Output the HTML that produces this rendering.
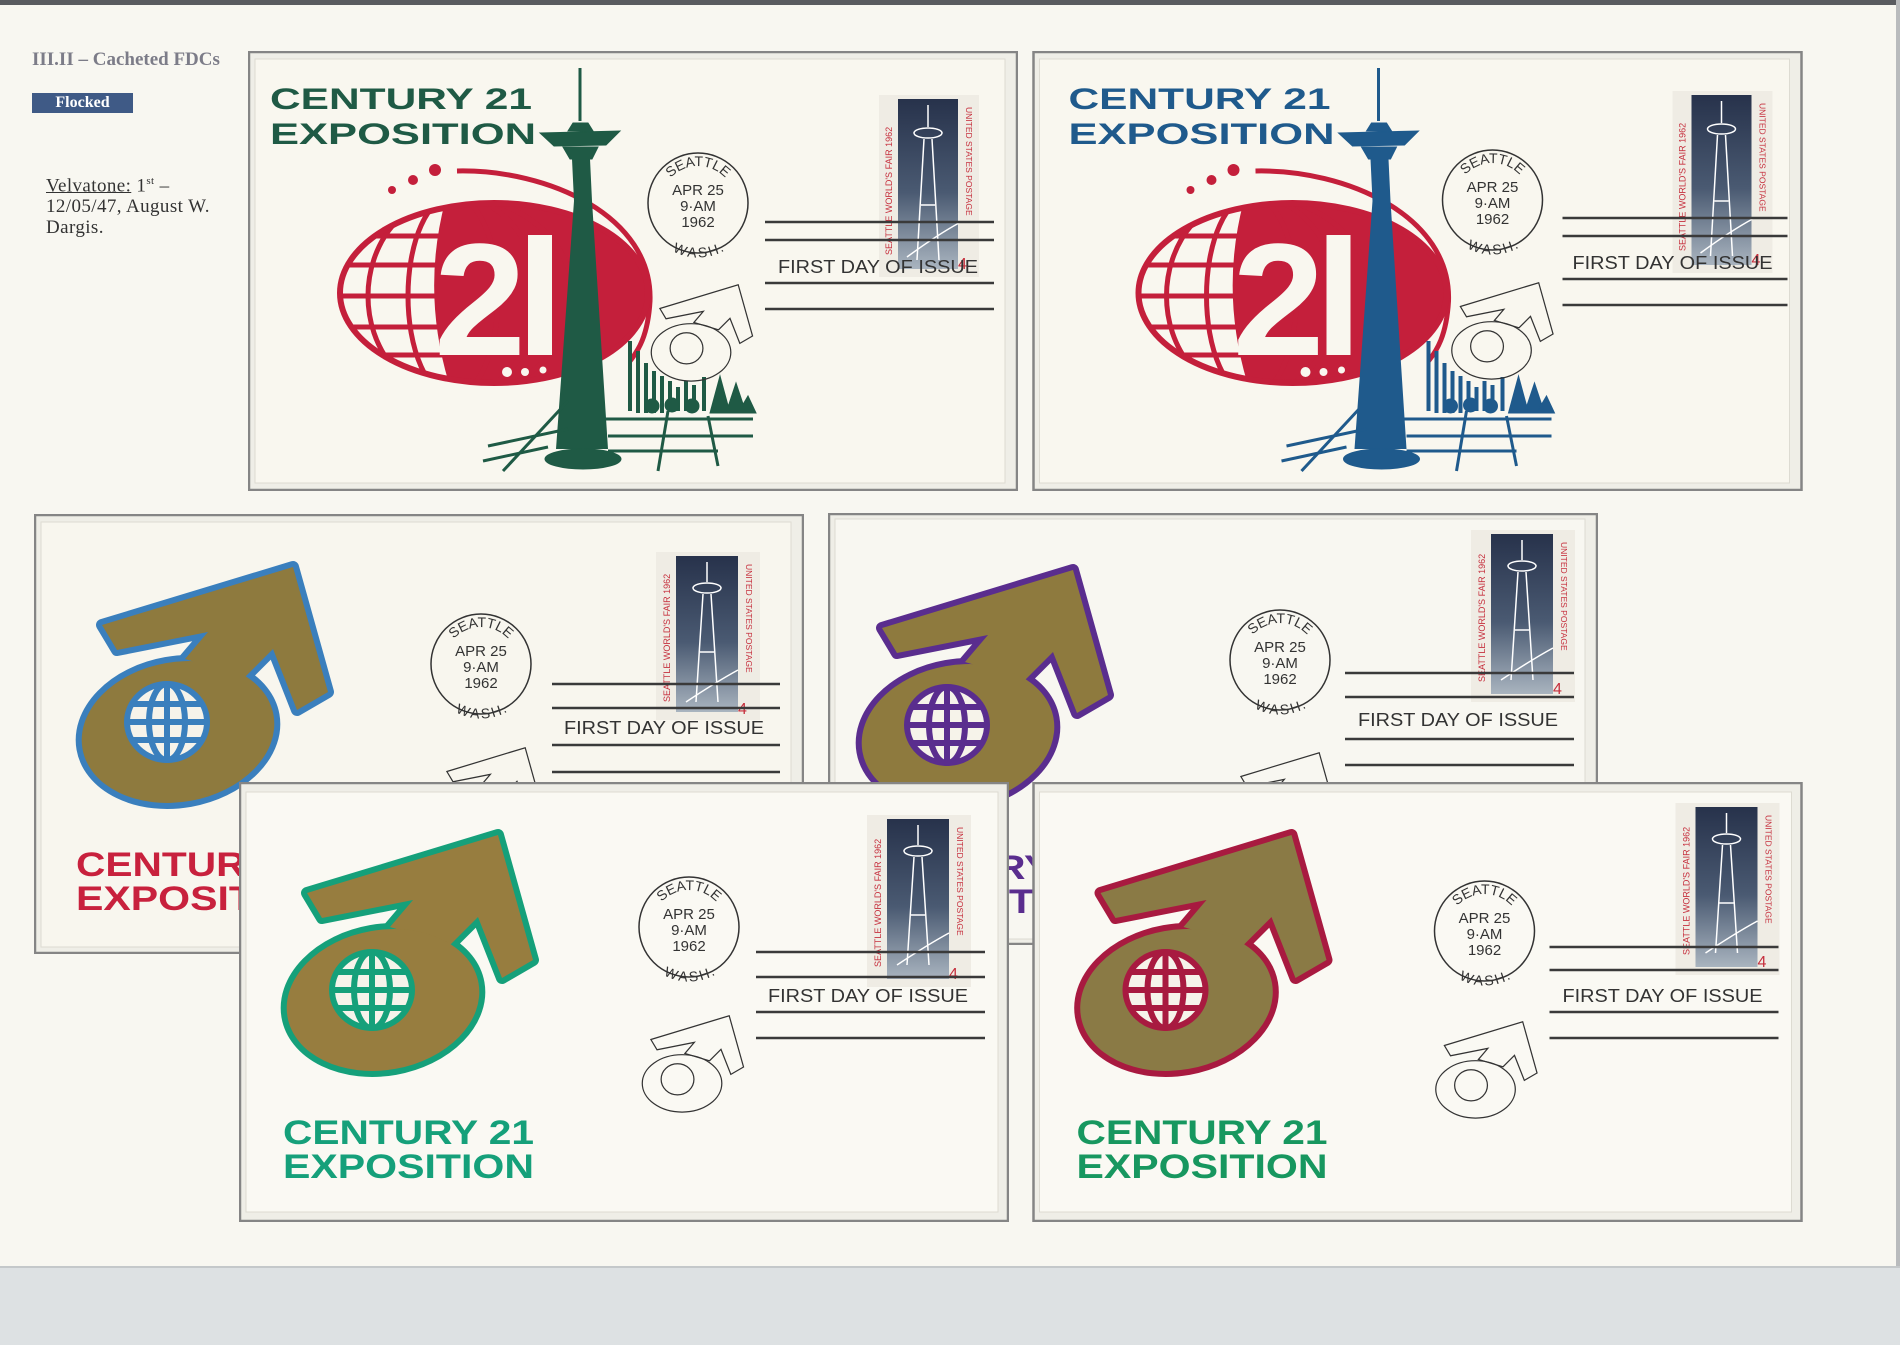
<!DOCTYPE html>
<html><head><meta charset="utf-8"><style>
html,body{margin:0;padding:0;}
body{width:1900px;height:1343px;position:relative;overflow:hidden;background:#f8f7f1;font-family:"Liberation Sans",sans-serif;}
.top{position:absolute;left:0;top:0;width:1900px;height:5px;background:#5a5c60;}
.rb{position:absolute;left:1896px;top:0;width:4px;height:1267px;background:#b9bbbd;}
.bot{position:absolute;left:0;top:1266px;width:1900px;height:77px;background:#dde1e3;border-top:2px solid #c4c8ca;}
.hd{position:absolute;left:32px;top:49px;font-family:"Liberation Serif",serif;font-weight:bold;font-size:19px;color:#7c7c88;white-space:nowrap;}
.fl{position:absolute;left:32px;top:93px;width:101px;height:20px;background:#3f5a86;color:#fff;font-family:"Liberation Serif",serif;font-weight:bold;font-size:16px;line-height:20px;text-align:center;}
.vt{position:absolute;left:46px;top:171px;font-family:"Liberation Serif",serif;font-size:19px;line-height:21px;color:#333;letter-spacing:0.4px;white-space:nowrap;}
.vt sup{font-size:11px;}
svg.c{position:absolute;}
</style></head><body>
<div class="top"></div><div class="rb"></div><div class="bot"></div>
<div class="hd">III.II – Cacheted FDCs</div>
<div class="fl">Flocked</div>
<div class="vt"><u>Velvatone:</u> 1<sup>st</sup> –<br>12/05/47, August W.<br>Dargis.</div>

<svg width="0" height="0" style="position:absolute">
<defs>
<linearGradient id="sg" x1="0" y1="0" x2="0" y2="1"><stop offset="0" stop-color="#27324b"/><stop offset="0.55" stop-color="#4a5a72"/><stop offset="1" stop-color="#a9b4bf"/></linearGradient>
<path id="at" d="M -37,0 A 37,37 0 0 1 37,0"/>
<path id="ab" d="M -44,0 A 44,44 0 0 0 44,0"/>
<clipPath id="ov"><ellipse cx="246" cy="242" rx="156" ry="92"/></clipPath>
</defs></svg>

<!-- COVER 3 (back) -->
<svg class="c" style="left:34px;top:514px" width="770" height="440" viewBox="0 0 770 440">
<rect x="1" y="1" width="768" height="438" fill="#efeee7" stroke="#858585" stroke-width="2.5"/>
<rect x="7" y="8" width="750" height="425" fill="#f8f6ee" stroke="#dddbd2"/>
<g stroke="#3a7fbd" stroke-width="12" stroke-linejoin="round"><polygon points="68,111 259,53 294,178 263,196 239,135 211,163 151,145 174,118 83,136"/><ellipse cx="144" cy="218" rx="97" ry="70" transform="rotate(-10 144 218)"/></g>
<g fill="#8e7a3e"><polygon points="68,111 259,53 294,178 263,196 239,135 211,163 151,145 174,118 83,136"/><ellipse cx="144" cy="218" rx="97" ry="70" transform="rotate(-10 144 218)"/></g>
<g stroke="#3a7fbd" stroke-width="6" fill="none"><ellipse cx="133" cy="208" rx="40" ry="38" fill="#f6f3ea"/><ellipse cx="133" cy="208" rx="18" ry="38"/><line x1="133" y1="170" x2="133" y2="246"/><line x1="94" y1="208" x2="172" y2="208"/><line x1="99" y1="190" x2="167" y2="190"/><line x1="99" y1="226" x2="167" y2="226"/></g>
<text x="42" y="362" font-weight="bold" font-size="34" fill="#c8213d" textLength="251" lengthAdjust="spacingAndGlyphs">CENTURY 21</text>
<text x="42" y="396" font-weight="bold" font-size="34" fill="#c8213d" textLength="251" lengthAdjust="spacingAndGlyphs">EXPOSITION</text>
<g transform="translate(622,38)"><rect width="104" height="168" fill="#efece4"/><rect x="20" y="4" width="62" height="156" fill="url(#sg)"/><g stroke="#fff" stroke-width="1.5" fill="none"><line x1="51" y1="10" x2="51" y2="30"/><ellipse cx="51" cy="36" rx="14" ry="5"/><path d="M47,42 L40,150 M55,42 L62,150 M44,100 L58,100"/><path d="M30,150 Q60,130 82,118"/></g><text transform="translate(14,150) rotate(-90)" font-size="9" fill="#c62f3d">SEATTLE WORLD'S FAIR 1962</text><text transform="translate(90,12) rotate(90)" font-size="8.5" fill="#c62f3d">UNITED STATES POSTAGE</text><text x="82" y="162" font-size="16" fill="#c62f3d">4</text></g>
<g transform="translate(447,150)" fill="#333" font-size="15" text-anchor="middle"><circle r="50" fill="none" stroke="#333" stroke-width="1.5"/><text font-size="14"><textPath href="#at" startOffset="50%">SEATTLE</textPath></text><text font-size="14"><textPath href="#ab" startOffset="50%" dominant-baseline="hanging">WASH.</textPath></text><text y="-8">APR 25</text><text y="8">9·AM</text><text y="24">1962</text></g>
<g stroke="#3a3a3a" stroke-width="2.5"><line x1="518" y1="170" x2="746" y2="170"/><line x1="518" y1="194" x2="746" y2="194"/><line x1="518" y1="231" x2="746" y2="231"/><line x1="518" y1="258" x2="746" y2="258"/></g>
<text x="530" y="220" font-size="18" fill="#333" textLength="200" lengthAdjust="spacingAndGlyphs">FIRST DAY OF ISSUE</text>
<g transform="translate(385,212) scale(0.41)" fill="none" stroke="#333" stroke-width="3"><polygon points="68,111 259,53 294,178 263,196 239,135 211,163 151,145 174,118 83,136"/><ellipse cx="144" cy="218" rx="97" ry="70"/><ellipse cx="133" cy="208" rx="40" ry="38"/></g>
</svg>

<!-- COVER 4 (back) -->
<svg class="c" style="left:828px;top:513px" width="770" height="432" viewBox="0 0 770 432">
<rect x="1" y="1" width="768" height="430" fill="#efeee7" stroke="#858585" stroke-width="2.5"/>
<rect x="7" y="6" width="750" height="420" fill="#f8f7f1" stroke="#dddbd2"/>
<g transform="translate(-14,4)">
<g stroke="#5a2d8e" stroke-width="12" stroke-linejoin="round"><polygon points="68,111 259,53 294,178 263,196 239,135 211,163 151,145 174,118 83,136"/><ellipse cx="144" cy="218" rx="97" ry="70" transform="rotate(-10 144 218)"/></g>
<g fill="#8e7a3e"><polygon points="68,111 259,53 294,178 263,196 239,135 211,163 151,145 174,118 83,136"/><ellipse cx="144" cy="218" rx="97" ry="70" transform="rotate(-10 144 218)"/></g>
<g stroke="#5a2d8e" stroke-width="6" fill="none"><ellipse cx="133" cy="208" rx="40" ry="38" fill="#f6f3ea"/><ellipse cx="133" cy="208" rx="18" ry="38"/><line x1="133" y1="170" x2="133" y2="246"/><line x1="94" y1="208" x2="172" y2="208"/><line x1="99" y1="190" x2="167" y2="190"/><line x1="99" y1="226" x2="167" y2="226"/></g>
<text x="42" y="362" font-weight="bold" font-size="34" fill="#5a2d8e" textLength="251" lengthAdjust="spacingAndGlyphs">CENTURY 21</text>
<text x="42" y="396" font-weight="bold" font-size="34" fill="#5a2d8e" textLength="251" lengthAdjust="spacingAndGlyphs">EXPOSITION</text>
</g>
<g transform="translate(643,17)"><rect width="104" height="172" fill="#efece4"/><rect x="20" y="4" width="62" height="160" fill="url(#sg)"/><g stroke="#fff" stroke-width="1.5" fill="none"><line x1="51" y1="10" x2="51" y2="30"/><ellipse cx="51" cy="36" rx="14" ry="5"/><path d="M47,42 L40,150 M55,42 L62,150 M44,100 L58,100"/><path d="M30,150 Q60,130 82,118"/></g><text transform="translate(14,152) rotate(-90)" font-size="9" fill="#c62f3d">SEATTLE WORLD'S FAIR 1962</text><text transform="translate(90,12) rotate(90)" font-size="8.5" fill="#c62f3d">UNITED STATES POSTAGE</text><text x="82" y="164" font-size="16" fill="#c62f3d">4</text></g>
<g transform="translate(452,147)" fill="#333" font-size="15" text-anchor="middle"><circle r="50" fill="none" stroke="#333" stroke-width="1.5"/><text font-size="14"><textPath href="#at" startOffset="50%">SEATTLE</textPath></text><text font-size="14"><textPath href="#ab" startOffset="50%" dominant-baseline="hanging">WASH.</textPath></text><text y="-8">APR 25</text><text y="8">9·AM</text><text y="24">1962</text></g>
<g stroke="#3a3a3a" stroke-width="2.5"><line x1="517" y1="160" x2="746" y2="160"/><line x1="517" y1="184" x2="746" y2="184"/><line x1="517" y1="226" x2="746" y2="226"/><line x1="517" y1="252" x2="746" y2="252"/></g>
<text x="530" y="213" font-size="18" fill="#333" textLength="200" lengthAdjust="spacingAndGlyphs">FIRST DAY OF ISSUE</text>
<g transform="translate(385,218) scale(0.41)" fill="none" stroke="#333" stroke-width="3"><polygon points="68,111 259,53 294,178 263,196 239,135 211,163 151,145 174,118 83,136"/><ellipse cx="144" cy="218" rx="97" ry="70"/></g>
</svg>

<!-- COVER 1 -->
<svg class="c" style="left:248px;top:51px" width="770" height="440" viewBox="0 0 770 440">
<rect x="1" y="1" width="768" height="438" fill="#efeee7" stroke="#858585" stroke-width="2.5"/>
<rect x="7" y="8" width="750" height="424" fill="#f9f7ef" stroke="#dddbd2"/>
<text x="22" y="58" font-weight="bold" font-size="30" fill="#1f5a45" textLength="262" lengthAdjust="spacingAndGlyphs">CENTURY 21</text>
<text x="22" y="93" font-weight="bold" font-size="30" fill="#1f5a45" textLength="266" lengthAdjust="spacingAndGlyphs">EXPOSITION</text>
<g fill="#c41f3b"><circle cx="144" cy="139" r="4"/><circle cx="165" cy="129" r="5"/><circle cx="187" cy="119" r="6"/></g>
<path d="M209,120 C300,118 405,165 402,250 C400,285 390,300 382,310" fill="none" stroke="#c41f3b" stroke-width="5"/>
<ellipse cx="246" cy="242" rx="156" ry="92" fill="#c41f3b"/>
<g clip-path="url(#ov)"><path d="M80,140 L200,140 Q170,242 205,345 L80,345 Z" fill="#f9f7ef"/>
<g stroke="#c41f3b" stroke-width="5" fill="none"><line x1="80" y1="185" x2="200" y2="185"/><line x1="80" y1="214" x2="200" y2="214"/><line x1="80" y1="245" x2="200" y2="245"/><line x1="80" y1="276" x2="200" y2="276"/><line x1="80" y1="304" x2="200" y2="304"/><ellipse cx="205" cy="245" rx="45" ry="100"/><ellipse cx="205" cy="245" rx="85" ry="100"/><ellipse cx="205" cy="245" rx="120" ry="100"/></g></g>
<ellipse cx="246" cy="242" rx="154" ry="90" fill="none" stroke="#c41f3b" stroke-width="6"/>
<text x="186" y="304" font-weight="bold" font-size="160" fill="#f9f7ef" textLength="92" lengthAdjust="spacingAndGlyphs">2</text>
<rect x="280" y="184" width="24" height="120" fill="#f9f7ef"/>
<g fill="#f9f7ef"><circle cx="259" cy="321" r="5"/><circle cx="277" cy="321" r="4"/><circle cx="295" cy="319" r="3.5"/></g>
<g fill="#1f5a45" stroke="#1f5a45">
<line x1="332" y1="17" x2="332" y2="70" stroke-width="3"/>
<path d="M325,72 L340,72 L345,80 L320,80 Z"/><path d="M292,82 L372,80 L358,94 L306,95 Z"/><path d="M315,96 L350,96 L344,108 L322,108 Z"/>
<path d="M324,108 L342,108 L344,150 L360,398 L308,398 L326,150 Z" stroke="none"/>
<ellipse cx="335" cy="408" rx="38" ry="10"/>
<g stroke-width="4"><line x1="382" y1="290" x2="382" y2="360"/><line x1="390" y1="300" x2="390" y2="362"/><line x1="398" y1="312" x2="398" y2="362"/><line x1="406" y1="320" x2="406" y2="362"/><line x1="414" y1="325" x2="414" y2="362"/><line x1="422" y1="330" x2="422" y2="360"/><line x1="430" y1="336" x2="430" y2="360"/><line x1="438" y1="330" x2="438" y2="360"/><line x1="446" y1="334" x2="446" y2="360"/><line x1="456" y1="326" x2="456" y2="360"/></g>
<path d="M462,362 L472,325 L482,362 Z M478,362 L488,332 L498,362 Z M490,362 L500,345 L508,362 Z"/>
<g stroke-width="3" fill="none"><line x1="240" y1="395" x2="320" y2="378"/><line x1="235" y1="410" x2="300" y2="396"/><line x1="255" y1="420" x2="320" y2="350"/><line x1="350" y1="368" x2="505" y2="368"/><line x1="360" y1="385" x2="505" y2="385"/><line x1="360" y1="400" x2="470" y2="400"/><line x1="420" y1="360" x2="410" y2="420"/><line x1="460" y1="365" x2="470" y2="415"/></g>
<circle cx="404" cy="355" r="7"/><circle cx="424" cy="354" r="7"/><circle cx="444" cy="355" r="7"/></g>
<g transform="translate(631,44)"><rect width="100" height="182" fill="#efece4"/><rect x="19" y="4" width="60" height="170" fill="url(#sg)"/><g stroke="#fff" stroke-width="1.5" fill="none"><line x1="49" y1="10" x2="49" y2="32"/><ellipse cx="49" cy="38" rx="14" ry="5"/><path d="M45,44 L38,165 M53,44 L60,165 M42,110 L56,110"/><path d="M28,162 Q58,140 80,128"/></g><text transform="translate(13,160) rotate(-90)" font-size="9" fill="#c62f3d">SEATTLE WORLD'S FAIR 1962</text><text transform="translate(87,12) rotate(90)" font-size="8.5" fill="#c62f3d">UNITED STATES POSTAGE</text><text x="79" y="174" font-size="16" fill="#c62f3d">4</text></g>
<g transform="translate(450,152)" fill="#333" font-size="15" text-anchor="middle"><circle r="50" fill="none" stroke="#333" stroke-width="1.5"/><text font-size="14"><textPath href="#at" startOffset="50%">SEATTLE</textPath></text><text font-size="14"><textPath href="#ab" startOffset="50%" dominant-baseline="hanging">WASH.</textPath></text><text y="-8">APR 25</text><text y="8">9·AM</text><text y="24">1962</text></g>
<g stroke="#3a3a3a" stroke-width="2.5"><line x1="517" y1="171" x2="746" y2="171"/><line x1="517" y1="189" x2="746" y2="189"/><line x1="517" y1="232" x2="746" y2="232"/><line x1="517" y1="258" x2="746" y2="258"/></g>
<text x="530" y="222" font-size="18" fill="#333" textLength="200" lengthAdjust="spacingAndGlyphs">FIRST DAY OF ISSUE</text>
<g transform="translate(384,212) scale(0.41)" fill="none" stroke="#333" stroke-width="3"><polygon points="68,111 259,53 294,178 263,196 239,135 211,163 151,145 174,118 83,136"/><ellipse cx="144" cy="218" rx="97" ry="70"/><ellipse cx="133" cy="208" rx="40" ry="38"/></g>
</svg>

<!-- COVER 2 -->
<svg class="c" style="left:1032px;top:51px" width="771" height="440" viewBox="0 0 770 440">
<rect x="1" y="1" width="768" height="438" fill="#efeee7" stroke="#858585" stroke-width="2.5"/>
<rect x="7" y="8" width="750" height="424" fill="#f9f7ef" stroke="#dddbd2"/>
<g transform="translate(14,0)">
<text x="22" y="58" font-weight="bold" font-size="30" fill="#1f5a8c" textLength="262" lengthAdjust="spacingAndGlyphs">CENTURY 21</text>
<text x="22" y="93" font-weight="bold" font-size="30" fill="#1f5a8c" textLength="266" lengthAdjust="spacingAndGlyphs">EXPOSITION</text>
<g fill="#c41f3b"><circle cx="144" cy="139" r="4"/><circle cx="165" cy="129" r="5"/><circle cx="187" cy="119" r="6"/></g>
<path d="M209,120 C300,118 405,165 402,250 C400,285 390,300 382,310" fill="none" stroke="#c41f3b" stroke-width="5"/>
<ellipse cx="246" cy="242" rx="156" ry="92" fill="#c41f3b"/>
<g clip-path="url(#ov)"><path d="M80,140 L200,140 Q170,242 205,345 L80,345 Z" fill="#f9f7ef"/>
<g stroke="#c41f3b" stroke-width="5" fill="none"><line x1="80" y1="185" x2="200" y2="185"/><line x1="80" y1="214" x2="200" y2="214"/><line x1="80" y1="245" x2="200" y2="245"/><line x1="80" y1="276" x2="200" y2="276"/><line x1="80" y1="304" x2="200" y2="304"/><ellipse cx="205" cy="245" rx="45" ry="100"/><ellipse cx="205" cy="245" rx="85" ry="100"/><ellipse cx="205" cy="245" rx="120" ry="100"/></g></g>
<ellipse cx="246" cy="242" rx="154" ry="90" fill="none" stroke="#c41f3b" stroke-width="6"/>
<text x="186" y="304" font-weight="bold" font-size="160" fill="#f9f7ef" textLength="92" lengthAdjust="spacingAndGlyphs">2</text>
<rect x="280" y="184" width="24" height="120" fill="#f9f7ef"/>
<g fill="#f9f7ef"><circle cx="259" cy="321" r="5"/><circle cx="277" cy="321" r="4"/><circle cx="295" cy="319" r="3.5"/></g>
<g fill="#1f5a8c" stroke="#1f5a8c">
<line x1="332" y1="17" x2="332" y2="70" stroke-width="3"/>
<path d="M325,72 L340,72 L345,80 L320,80 Z"/><path d="M292,82 L372,80 L358,94 L306,95 Z"/><path d="M315,96 L350,96 L344,108 L322,108 Z"/>
<path d="M324,108 L342,108 L344,150 L360,398 L308,398 L326,150 Z" stroke="none"/>
<ellipse cx="335" cy="408" rx="38" ry="10"/>
<g stroke-width="4"><line x1="382" y1="290" x2="382" y2="360"/><line x1="390" y1="300" x2="390" y2="362"/><line x1="398" y1="312" x2="398" y2="362"/><line x1="406" y1="320" x2="406" y2="362"/><line x1="414" y1="325" x2="414" y2="362"/><line x1="422" y1="330" x2="422" y2="360"/><line x1="430" y1="336" x2="430" y2="360"/><line x1="438" y1="330" x2="438" y2="360"/><line x1="446" y1="334" x2="446" y2="360"/><line x1="456" y1="326" x2="456" y2="360"/></g>
<path d="M462,362 L472,325 L482,362 Z M478,362 L488,332 L498,362 Z M490,362 L500,345 L508,362 Z"/>
<g stroke-width="3" fill="none"><line x1="240" y1="395" x2="320" y2="378"/><line x1="235" y1="410" x2="300" y2="396"/><line x1="255" y1="420" x2="320" y2="350"/><line x1="350" y1="368" x2="505" y2="368"/><line x1="360" y1="385" x2="505" y2="385"/><line x1="360" y1="400" x2="470" y2="400"/><line x1="420" y1="360" x2="410" y2="420"/><line x1="460" y1="365" x2="470" y2="415"/></g>
<circle cx="404" cy="355" r="7"/><circle cx="424" cy="354" r="7"/><circle cx="444" cy="355" r="7"/></g>
</g>
<g transform="translate(640,40)"><rect width="100" height="182" fill="#efece4"/><rect x="19" y="4" width="60" height="170" fill="url(#sg)"/><g stroke="#fff" stroke-width="1.5" fill="none"><line x1="49" y1="10" x2="49" y2="32"/><ellipse cx="49" cy="38" rx="14" ry="5"/><path d="M45,44 L38,165 M53,44 L60,165 M42,110 L56,110"/><path d="M28,162 Q58,140 80,128"/></g><text transform="translate(13,160) rotate(-90)" font-size="9" fill="#c62f3d">SEATTLE WORLD'S FAIR 1962</text><text transform="translate(87,12) rotate(90)" font-size="8.5" fill="#c62f3d">UNITED STATES POSTAGE</text><text x="79" y="174" font-size="16" fill="#c62f3d">4</text></g>
<g transform="translate(460,149)" fill="#333" font-size="15" text-anchor="middle"><circle r="50" fill="none" stroke="#333" stroke-width="1.5"/><text font-size="14"><textPath href="#at" startOffset="50%">SEATTLE</textPath></text><text font-size="14"><textPath href="#ab" startOffset="50%" dominant-baseline="hanging">WASH.</textPath></text><text y="-8">APR 25</text><text y="8">9·AM</text><text y="24">1962</text></g>
<g stroke="#3a3a3a" stroke-width="2.5"><line x1="530" y1="167" x2="755" y2="167"/><line x1="530" y1="185" x2="755" y2="185"/><line x1="530" y1="228" x2="755" y2="228"/><line x1="530" y1="254" x2="755" y2="254"/></g>
<text x="540" y="218" font-size="18" fill="#333" textLength="200" lengthAdjust="spacingAndGlyphs">FIRST DAY OF ISSUE</text>
<g transform="translate(400,210) scale(0.41)" fill="none" stroke="#333" stroke-width="3"><polygon points="68,111 259,53 294,178 263,196 239,135 211,163 151,145 174,118 83,136"/><ellipse cx="144" cy="218" rx="97" ry="70"/><ellipse cx="133" cy="208" rx="40" ry="38"/></g>
</svg>

<!-- COVER 5 -->
<svg class="c" style="left:239px;top:782px" width="770" height="440" viewBox="0 0 770 440">
<rect x="1" y="1" width="768" height="438" fill="#efeee7" stroke="#858585" stroke-width="2.5"/>
<rect x="7" y="10" width="752" height="420" fill="#faf9f3" stroke="#dddbd2"/>
<g stroke="#15a07a" stroke-width="12" stroke-linejoin="round"><polygon points="68,111 259,53 294,178 263,196 239,135 211,163 151,145 174,118 83,136"/><ellipse cx="144" cy="218" rx="97" ry="70" transform="rotate(-10 144 218)"/></g>
<g fill="#977d3f"><polygon points="68,111 259,53 294,178 263,196 239,135 211,163 151,145 174,118 83,136"/><ellipse cx="144" cy="218" rx="97" ry="70" transform="rotate(-10 144 218)"/></g>
<g stroke="#15a07a" stroke-width="6" fill="none"><ellipse cx="133" cy="208" rx="40" ry="38" fill="#f6f3ea"/><ellipse cx="133" cy="208" rx="18" ry="38"/><line x1="133" y1="170" x2="133" y2="246"/><line x1="94" y1="208" x2="172" y2="208"/><line x1="99" y1="190" x2="167" y2="190"/><line x1="99" y1="226" x2="167" y2="226"/></g>
<text x="44" y="362" font-weight="bold" font-size="34" fill="#15a07a" textLength="251" lengthAdjust="spacingAndGlyphs">CENTURY 21</text>
<text x="44" y="396" font-weight="bold" font-size="34" fill="#15a07a" textLength="251" lengthAdjust="spacingAndGlyphs">EXPOSITION</text>
<g transform="translate(628,33)"><rect width="104" height="172" fill="#efece4"/><rect x="20" y="4" width="62" height="160" fill="url(#sg)"/><g stroke="#fff" stroke-width="1.5" fill="none"><line x1="51" y1="10" x2="51" y2="30"/><ellipse cx="51" cy="36" rx="14" ry="5"/><path d="M47,42 L40,150 M55,42 L62,150 M44,100 L58,100"/><path d="M30,150 Q60,130 82,118"/></g><text transform="translate(14,152) rotate(-90)" font-size="9" fill="#c62f3d">SEATTLE WORLD'S FAIR 1962</text><text transform="translate(90,12) rotate(90)" font-size="8.5" fill="#c62f3d">UNITED STATES POSTAGE</text><text x="82" y="164" font-size="16" fill="#c62f3d">4</text></g>
<g transform="translate(450,145)" fill="#333" font-size="15" text-anchor="middle"><circle r="50" fill="none" stroke="#333" stroke-width="1.5"/><text font-size="14"><textPath href="#at" startOffset="50%">SEATTLE</textPath></text><text font-size="14"><textPath href="#ab" startOffset="50%" dominant-baseline="hanging">WASH.</textPath></text><text y="-8">APR 25</text><text y="8">9·AM</text><text y="24">1962</text></g>
<g stroke="#3a3a3a" stroke-width="2.5"><line x1="517" y1="170" x2="746" y2="170"/><line x1="517" y1="195" x2="746" y2="195"/><line x1="517" y1="230" x2="746" y2="230"/><line x1="517" y1="256" x2="746" y2="256"/></g>
<text x="529" y="220" font-size="18" fill="#333" textLength="200" lengthAdjust="spacingAndGlyphs">FIRST DAY OF ISSUE</text>
<g transform="translate(384,212) scale(0.41)" fill="none" stroke="#333" stroke-width="3"><polygon points="68,111 259,53 294,178 263,196 239,135 211,163 151,145 174,118 83,136"/><ellipse cx="144" cy="218" rx="97" ry="70"/><ellipse cx="133" cy="208" rx="40" ry="38"/></g>
</svg>

<!-- COVER 6 -->
<svg class="c" style="left:1032px;top:782px" width="771" height="440" viewBox="0 0 770 440">
<rect x="1" y="1" width="768" height="438" fill="#efeee7" stroke="#858585" stroke-width="2.5"/>
<rect x="7" y="10" width="752" height="420" fill="#faf9f3" stroke="#dddbd2"/>
<g stroke="#a81a40" stroke-width="12" stroke-linejoin="round"><polygon points="68,111 259,53 294,178 263,196 239,135 211,163 151,145 174,118 83,136"/><ellipse cx="144" cy="218" rx="97" ry="70" transform="rotate(-10 144 218)"/></g>
<g fill="#8a7a45"><polygon points="68,111 259,53 294,178 263,196 239,135 211,163 151,145 174,118 83,136"/><ellipse cx="144" cy="218" rx="97" ry="70" transform="rotate(-10 144 218)"/></g>
<g stroke="#a81a40" stroke-width="6" fill="none"><ellipse cx="133" cy="208" rx="40" ry="38" fill="#f6f3ea"/><ellipse cx="133" cy="208" rx="18" ry="38"/><line x1="133" y1="170" x2="133" y2="246"/><line x1="94" y1="208" x2="172" y2="208"/><line x1="99" y1="190" x2="167" y2="190"/><line x1="99" y1="226" x2="167" y2="226"/></g>
<text x="44" y="362" font-weight="bold" font-size="34" fill="#17975f" textLength="251" lengthAdjust="spacingAndGlyphs">CENTURY 21</text>
<text x="44" y="396" font-weight="bold" font-size="34" fill="#17975f" textLength="251" lengthAdjust="spacingAndGlyphs">EXPOSITION</text>
<g transform="translate(643,21)"><rect width="104" height="172" fill="#efece4"/><rect x="20" y="4" width="62" height="160" fill="url(#sg)"/><g stroke="#fff" stroke-width="1.5" fill="none"><line x1="51" y1="10" x2="51" y2="30"/><ellipse cx="51" cy="36" rx="14" ry="5"/><path d="M47,42 L40,150 M55,42 L62,150 M44,100 L58,100"/><path d="M30,150 Q60,130 82,118"/></g><text transform="translate(14,152) rotate(-90)" font-size="9" fill="#c62f3d">SEATTLE WORLD'S FAIR 1962</text><text transform="translate(90,12) rotate(90)" font-size="8.5" fill="#c62f3d">UNITED STATES POSTAGE</text><text x="82" y="164" font-size="16" fill="#c62f3d">4</text></g>
<g transform="translate(452,149)" fill="#333" font-size="15" text-anchor="middle"><circle r="50" fill="none" stroke="#333" stroke-width="1.5"/><text font-size="14"><textPath href="#at" startOffset="50%">SEATTLE</textPath></text><text font-size="14"><textPath href="#ab" startOffset="50%" dominant-baseline="hanging">WASH.</textPath></text><text y="-8">APR 25</text><text y="8">9·AM</text><text y="24">1962</text></g>
<g stroke="#3a3a3a" stroke-width="2.5"><line x1="517" y1="165" x2="746" y2="165"/><line x1="517" y1="188" x2="746" y2="188"/><line x1="517" y1="230" x2="746" y2="230"/><line x1="517" y1="256" x2="746" y2="256"/></g>
<text x="530" y="220" font-size="18" fill="#333" textLength="200" lengthAdjust="spacingAndGlyphs">FIRST DAY OF ISSUE</text>
<g transform="translate(384,218) scale(0.41)" fill="none" stroke="#333" stroke-width="3"><polygon points="68,111 259,53 294,178 263,196 239,135 211,163 151,145 174,118 83,136"/><ellipse cx="144" cy="218" rx="97" ry="70"/><ellipse cx="133" cy="208" rx="40" ry="38"/></g>
</svg>
</body></html>
